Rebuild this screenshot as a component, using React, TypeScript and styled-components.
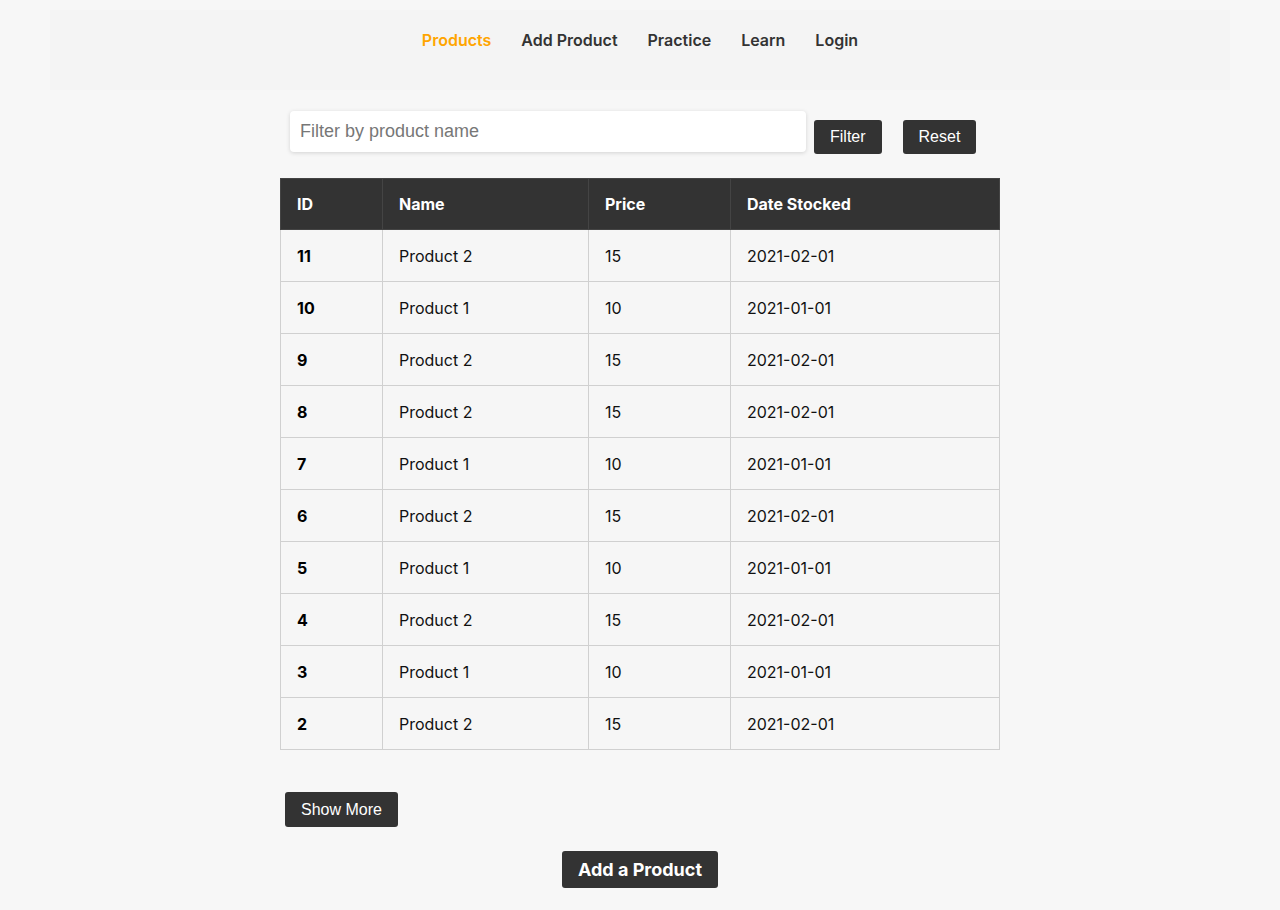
import styled, { createGlobalStyle } from 'styled-components';

const GlobalStyle = createGlobalStyle`
  html, body {
    margin: 0;
    padding: 0;
    background: #f7f7f7;
    font-family: Inter, "Noto Sans", sans-serif;
    color: #111;
  }
`;

const Nav = styled.nav`
  margin: 10px 50px 0;
  height: 80px;
  box-sizing: border-box;
  padding-top: 19px;
  background: #f4f4f4;
  display: flex;
  justify-content: center;
  gap: 30px;
`;

const NavLink = styled.a<{ $active?: boolean }>`
  font-size: 16px;
  font-weight: 600;
  line-height: 22px;
  height: 22px;
  color: ${({ $active }) => ($active ? '#ffa500' : '#333')};
  text-decoration: none;
  cursor: pointer;
`;

const Main = styled.main`
  width: 720px;
  margin: 0 auto;
  display: flex;
  flex-direction: column;
`;

const FilterRow = styled.div`
  display: flex;
  align-items: flex-start;
  padding: 21px 0 0 10px;
  height: 88px;
  box-sizing: border-box;
`;

const FilterInput = styled.input`
  width: 516px;
  height: 41px;
  box-sizing: border-box;
  border: none;
  border-radius: 4px;
  background: #fff;
  box-shadow: 0 1px 4px rgba(0, 0, 0, 0.15);
  padding: 0 10px;
  font-family: "Liberation Sans", Arial, sans-serif;
  font-size: 18px;
  color: #333;
  outline: none;

  &::placeholder {
    color: #777;
  }
`;

const DarkButton = styled.button<{ $gap?: number }>`
  margin: 9px 0 0 ${({ $gap }) => $gap ?? 0}px;
  height: 34px;
  padding: 0 16px;
  border: none;
  border-radius: 3px;
  background: #333;
  color: #fff;
  font-family: "Liberation Sans", Arial, sans-serif;
  font-size: 16px;
  cursor: pointer;
`;

const Table = styled.table`
  width: 719px;
  border-collapse: collapse;
  table-layout: fixed;
`;

const Th = styled.th<{ $w: number }>`
  width: ${({ $w }) => $w}px;
  height: 51px;
  box-sizing: border-box;
  padding: 0 16px;
  background: #333;
  color: #fff;
  font-size: 16px;
  font-weight: 700;
  text-align: left;
  border: 1px solid #444;
`;

const Td = styled.td<{ $bold?: boolean }>`
  height: 52px;
  box-sizing: border-box;
  padding: 0 16px;
  background: #f6f6f6;
  border: 1px solid #d0d0d0;
  font-size: 16px;
  font-weight: ${({ $bold }) => ($bold ? 700 : 400)};
  color: ${({ $bold }) => ($bold ? '#000' : '#111')};
`;

const ShowMore = styled(DarkButton)`
  align-self: flex-start;
  margin: 42px 0 0 5px;
  height: 35px;
`;

const AddButton = styled.button`
  align-self: center;
  margin-top: 24px;
  height: 37px;
  padding: 0 16px;
  border: none;
  border-radius: 3px;
  background: #333;
  color: #fff;
  font-family: Inter, sans-serif;
  font-size: 18px;
  font-weight: 700;
  cursor: pointer;
`;

const rows = [
  { id: 11, name: 'Product 2', price: 15, date: '2021-02-01' },
  { id: 10, name: 'Product 1', price: 10, date: '2021-01-01' },
  { id: 9, name: 'Product 2', price: 15, date: '2021-02-01' },
  { id: 8, name: 'Product 2', price: 15, date: '2021-02-01' },
  { id: 7, name: 'Product 1', price: 10, date: '2021-01-01' },
  { id: 6, name: 'Product 2', price: 15, date: '2021-02-01' },
  { id: 5, name: 'Product 1', price: 10, date: '2021-01-01' },
  { id: 4, name: 'Product 2', price: 15, date: '2021-02-01' },
  { id: 3, name: 'Product 1', price: 10, date: '2021-01-01' },
  { id: 2, name: 'Product 2', price: 15, date: '2021-02-01' },
];

export default function App() {
  return (
    <>
      <GlobalStyle />
      <Nav>
        <NavLink $active>Products</NavLink>
        <NavLink>Add Product</NavLink>
        <NavLink>Practice</NavLink>
        <NavLink>Learn</NavLink>
        <NavLink>Login</NavLink>
      </Nav>
      <Main>
        <FilterRow>
          <FilterInput placeholder="Filter by product name" />
          <DarkButton $gap={8}>Filter</DarkButton>
          <DarkButton $gap={21}>Reset</DarkButton>
        </FilterRow>
        <Table>
          <thead>
            <tr>
              <Th $w={102}>ID</Th>
              <Th $w={206}>Name</Th>
              <Th $w={142}>Price</Th>
              <Th $w={269}>Date Stocked</Th>
            </tr>
          </thead>
          <tbody>
            {rows.map((r) => (
              <tr key={r.id}>
                <Td $bold>{r.id}</Td>
                <Td>{r.name}</Td>
                <Td>{r.price}</Td>
                <Td>{r.date}</Td>
              </tr>
            ))}
          </tbody>
        </Table>
        <ShowMore>Show More</ShowMore>
        <AddButton>Add a Product</AddButton>
      </Main>
    </>
  );
}
